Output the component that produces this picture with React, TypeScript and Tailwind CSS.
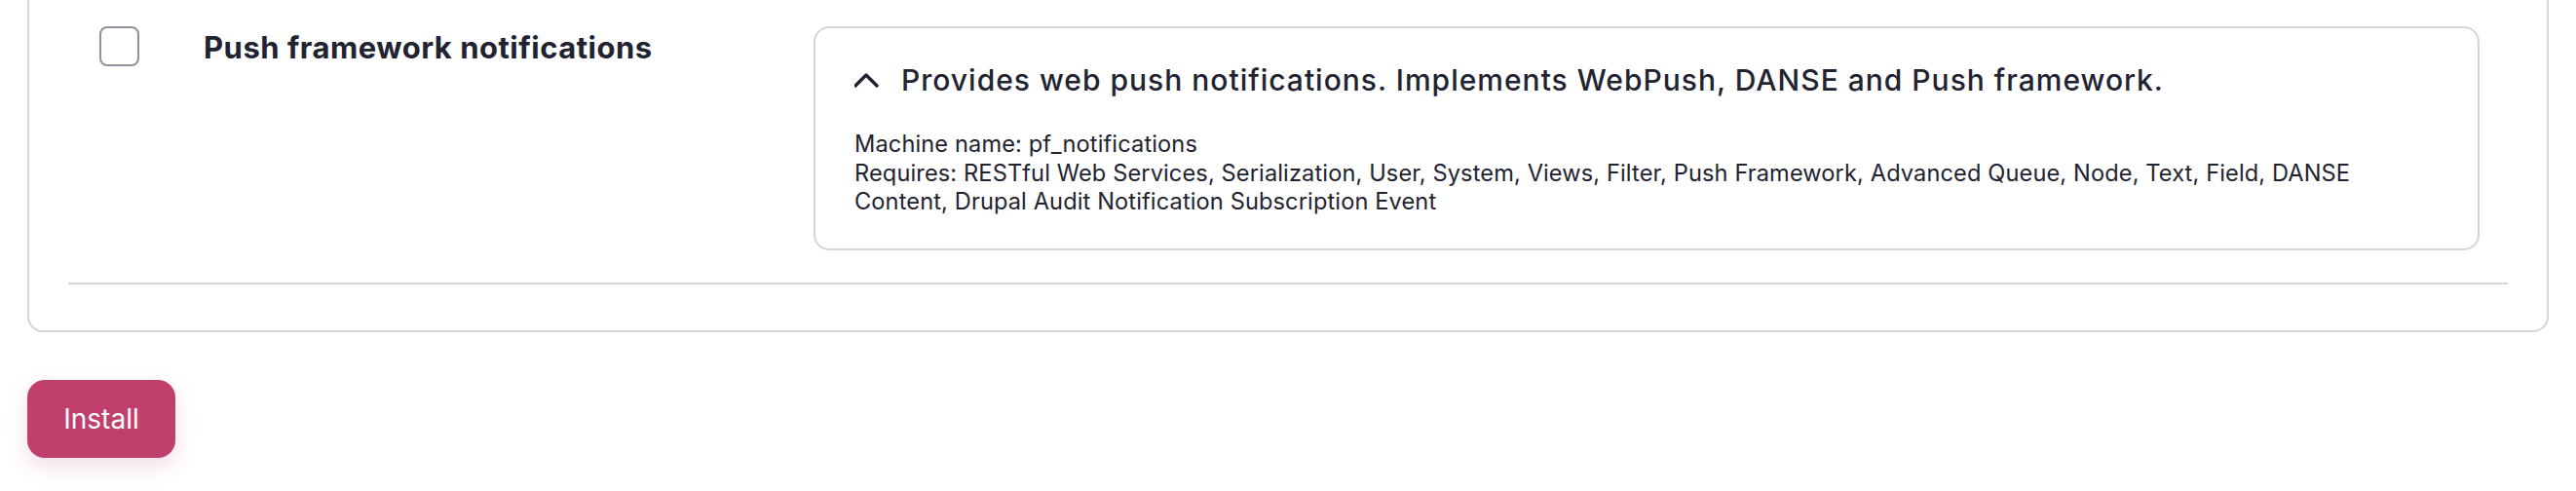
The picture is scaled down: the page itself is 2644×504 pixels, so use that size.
import { useState } from 'react'

const REQUIRES = [
  'RESTful Web Services', 'Serialization', 'User', 'System', 'Views', 'Filter', 'Push Framework',
  'Advanced Queue', 'Node', 'Text', 'Field', 'DANSE Content', 'Drupal Audit Notification Subscription Event',
]

function Chevron({ open }: { open: boolean }) {
  return (
    <svg width="26" height="16" viewBox="0 0 26 16" fill="none" className={open ? '' : 'rotate-180'}>
      <polyline points="1,14 12,3 23,14" stroke="#222330" strokeWidth="3.4" strokeLinecap="round" strokeLinejoin="round" />
    </svg>
  )
}

export default function App() {
  const [checked, setChecked] = useState(false)
  const [open, setOpen] = useState(true)

  return (
    <div className="min-h-screen bg-white px-[28px] text-[#222330]" style={{ fontFamily: 'Inter, "Noto Sans", sans-serif' }}>
      <div className="rounded-b-[16px] border-2 border-t-0 border-[#d4d4d9] px-[40px] pb-[47px]">
        <div className="flex items-start pt-[27px] pb-[33px]">
          <button
            className={`ml-[32px] h-[41px] w-[41px] shrink-0 rounded-[8px] border-2 ${checked ? 'border-[#c13f6d] bg-[#c13f6d]' : 'border-[#8e929c] bg-white'}`}
            onClick={() => setChecked(!checked)}
          />
          <div className="ml-[66px] w-[626px] shrink-0 pt-[1px] text-[31px] font-bold leading-[42px] tracking-[0.5px]">
            Push framework notifications
          </div>
          <div className="mr-[29px] flex-1 rounded-[16px] border-2 border-[#d4d4d9] px-[40px] pt-[32px] pb-[33px]">
            <button className="flex items-center gap-[22px] text-left" onClick={() => setOpen(!open)}>
              <Chevron open={open} />
              <span className="text-[30px] font-medium leading-[42px] tracking-[1px]">
                Provides web push notifications. Implements WebPush, DANSE and Push framework.
              </span>
            </button>
            {open && (
              <div className="mt-[30px] text-[23.6px] leading-[29.5px] tracking-[0.12px]">
                <div>Machine name: pf_notifications</div>
                <div>Requires: {REQUIRES.join(', ')}</div>
              </div>
            )}
          </div>
        </div>
        <div className="h-[2px] bg-[#d4d4d9]" />
      </div>
      <button className="mt-[49px] h-[80px] w-[152px] rounded-[18px] bg-[#c13f6d] text-[28px] text-white shadow-[0_8px_22px_rgba(193,63,109,0.18)]">
        Install
      </button>
    </div>
  )
}
